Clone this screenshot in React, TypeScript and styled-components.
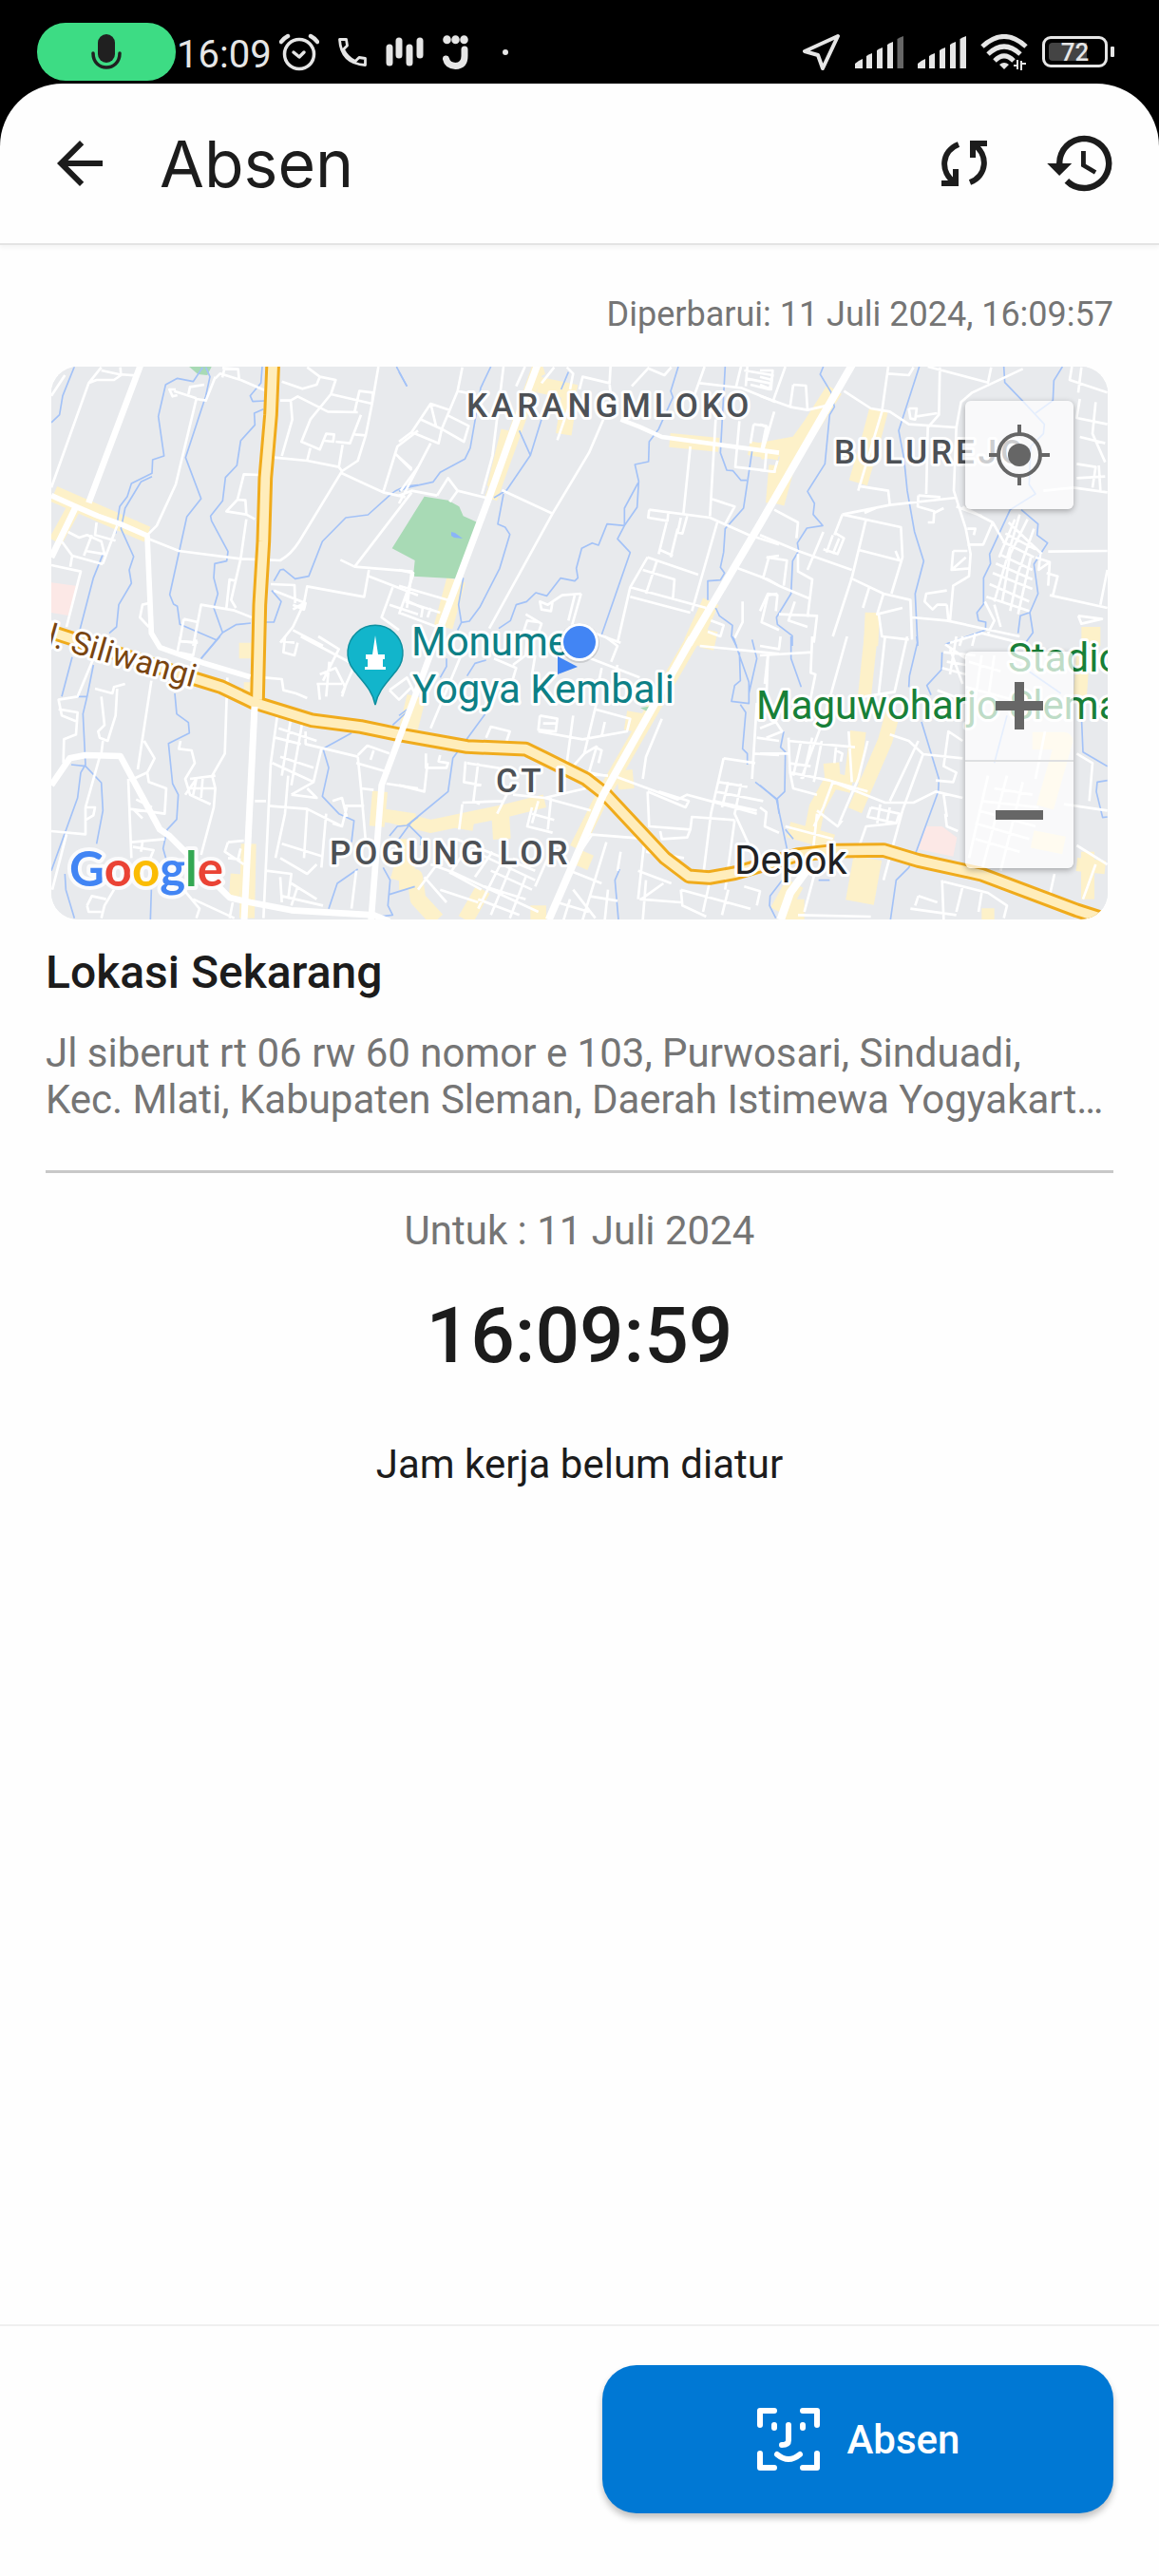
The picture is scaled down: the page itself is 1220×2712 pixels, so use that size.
import React from "react";
import styled, { createGlobalStyle, css } from "styled-components";
import { MdArrowBack, MdHistory } from "react-icons/md";

const ink = "#1c1c1c";
const muted = "#757575";
const statusInk = "#e6e6e6";

const GlobalStyle = createGlobalStyle`
  *, *::before, *::after { box-sizing: border-box; }
  body { margin: 0; background: #000; font-family: Roboto, "Noto Sans", sans-serif; color: ${ink}; }
  h1, h2, p { margin: 0; font-weight: 400; }
  button { border: 0; padding: 0; margin: 0; background: none; font: inherit; color: inherit; cursor: pointer; }
  svg { display: block; flex: none; }
`;

const Screen = styled.div`
  min-height: 100vh;
  display: flex;
  flex-direction: column;
`;

/* ---------- status bar ---------- */

const StatusBar = styled.div`
  display: flex;
  align-items: center;
  justify-content: space-between;
  height: 88px;
  padding: 24px 47px 3px 39px;
  color: ${statusInk};
`;

const StatusGroup = styled.div<{ $gap: number }>`
  display: flex;
  align-items: center;
  gap: ${(p) => p.$gap}px;
`;

const MicPill = styled.div`
  display: flex;
  align-items: center;
  justify-content: center;
  width: 146px;
  height: 61px;
  border-radius: 30px;
  background: #3ddc84;
`;

const StatusTime = styled.time`
  font-size: 40px;
  line-height: 48px;
  padding: 6px 8px 0 1px;
`;

const StatusDot = styled.span`
  width: 6px;
  height: 6px;
  margin-left: 16px;
  border-radius: 3px;
  background: ${statusInk};
`;

const Battery = styled.div`
  display: flex;
  align-items: center;
  gap: 3px;
`;

const BatteryBody = styled.div`
  width: 69px;
  height: 33px;
  border: 3px solid ${statusInk};
  border-radius: 9px;
  padding: 4px;
`;

const BatteryLevel = styled.div`
  display: flex;
  align-items: center;
  justify-content: center;
  height: 100%;
  border-radius: 4px;
  background: linear-gradient(to right, #444 72%, transparent 72%);
  font-size: 26px;
  line-height: 20px;
  font-weight: 500;
`;

const BatteryTip = styled.div`
  width: 4px;
  height: 11px;
  border-radius: 1px;
  background: ${statusInk};
`;

const Signal = ({ dimLast }: { dimLast?: boolean }) => (
  <svg width="51" height="34" viewBox="0 0 51 34" fill={statusInk} aria-hidden="true">
    <path d="M0 34V29Q3 26 8 24V34Z" />
    <path d="M12 34V21Q15 19 18 18V34Z" />
    <path d="M23 34V15Q26 13 29 12V34Z" />
    <path d="M34 34V9Q37 7 40 6V34Z" />
    <path d="M44.500 34V3Q48 1 51 0V34Z" fill={dimLast ? "#666" : statusInk} />
  </svg>
);

/* ---------- app bar ---------- */

const Sheet = styled.div`
  flex: 1;
  display: flex;
  flex-direction: column;
  background: #fefefe;
  border-radius: 66px 66px 0 0;
`;

const AppBar = styled.header`
  display: flex;
  align-items: center;
  height: 170px;
  padding: 0 43px 0 48px;
  border-bottom: 2px solid #e4e4e4;
  box-shadow: 0 3px 4px rgba(0, 0, 0, 0.04);
`;

const PageTitle = styled.h1`
  flex: 1;
  margin-left: 48px;
  font-family: Inter, Roboto, sans-serif;
  font-size: 68px;
  line-height: 80px;
`;

const Actions = styled.div`
  display: flex;
  align-items: center;
  gap: 60px;
`;

const IconButton = styled.button`
  display: flex;
  align-items: center;
  justify-content: center;
`;

/* ---------- content ---------- */

const Content = styled.main`
  flex: 1;
  display: flex;
  flex-direction: column;
  padding: 52px 48px 48px;
`;

const Updated = styled.p`
  text-align: right;
  font-size: 36px;
  line-height: 42px;
  color: ${muted};
`;

const MapFrame = styled.section`
  position: relative;
  height: 582px;
  margin: 34px 6px 28px;
  border-radius: 28px;
  overflow: hidden;
  background: #e8eaed;
`;

const floating = css`
  position: absolute;
  right: 36px;
  border-radius: 6px;
  background: rgba(255, 255, 255, 0.72);
  box-shadow: 0 2px 6px rgba(0, 0, 0, 0.3);
`;

const LocateButton = styled.button`
  ${floating}
  top: 36px;
  display: grid;
  place-items: center;
  width: 114px;
  height: 114px;
`;

const ZoomControls = styled.div`
  ${floating}
  bottom: 54px;
  display: flex;
  flex-direction: column;
  width: 114px;
`;

const ZoomButton = styled.button`
  display: grid;
  place-items: center;
  height: 114px;
  & + & { border-top: 2px solid #dedfe1; }
`;

const SectionTitle = styled.h2`
  font-size: 48px;
  line-height: 56px;
  font-weight: 500;
`;

const Address = styled.p`
  margin-top: 32px;
  padding-bottom: 50px;
  border-bottom: 3px solid #c8c8c8;
  font-size: 42px;
  line-height: 49px;
  color: ${muted};
`;

const Schedule = styled.section`
  display: flex;
  flex-direction: column;
  align-items: center;
  padding-top: 36px;
`;

const Line = styled.p<{ $muted?: boolean }>`
  font-size: 42px;
  line-height: 49px;
  color: ${(p) => (p.$muted ? muted : ink)};
`;

const Clock = styled.time`
  margin: 38px 0 63px;
  font-size: 82px;
  line-height: 96px;
  font-weight: 500;
`;

const Footer = styled.footer`
  display: grid;
  grid-template-columns: 1fr 1fr;
  gap: 48px;
  padding: 41px 48px 66px;
  border-top: 2px solid #efefef;
`;

const PrimaryButton = styled.button`
  grid-column: 2;
  display: flex;
  align-items: center;
  justify-content: center;
  gap: 28px;
  height: 156px;
  border-radius: 36px;
  background: #0078d4;
  box-shadow: 0 5px 7px rgba(0, 0, 0, 0.24);
  color: #fff;
  font-size: 42px;
  line-height: 49px;
  font-weight: 500;
`;

/* ---------- map artwork ---------- */

type Tile = {
  x: number;
  y: number;
  water: string;
  minor: string;
  roads?: [number, string][];
  built?: [number, string][];
  park?: string;
  pink?: string;
};

// Each tile is drawn at three units per pixel, from its own corner.
const tiles: Tile[] = [
  {
    x: -14,
    y: -16,
    water:
      "M115,48L78,140 68,200 42,225M520,50L490,95 440,85 403,105 380,205 398,330 362,342 360,385 295,417 282,458 258,490 245,575M205,640L175,715 132,880M360,395L325,412 275,495 262,560 302,648 288,690 295,732 255,800 248,870 225,890M530,50L543,80 530,140 466,335 515,465 470,522 416,768 428,798 440,805 448,862 565,912M708,48L704,100 670,140 678,158 715,156M712,182L683,195 685,232 640,282 628,360 592,398 583,472 545,520 548,535 600,632 596,662 558,670 555,715 568,765 555,810 583,888 515,970M583,888L625,863 672,858M715,855L745,855 768,790 738,755M745,725L765,690 775,688 812,718 855,710 898,600 972,525 1042,516 1110,455Q1140,425 1200,422M1132,48L1165,110",
    minor:
      "M42,430L160,100 200,50M160,100L185,90 240,90 262,75 260,50M200,60L255,72 310,76M42,140L85,75M560,80L530,155 500,150 435,420 375,550 345,580M430,125L500,148M435,120L415,120 425,142 440,138M475,135L480,112 525,105M560,85L575,70 640,90 715,122M590,50L582,82M582,52L632,56 635,88M345,590L445,630 640,655 765,660Q800,640 825,600L960,378 1010,345 1035,265 1000,262M960,378L950,365 850,345 745,335M950,365L962,295M765,155L798,155 820,142 915,190 1010,192M798,155L803,215 770,330M770,95L835,118 880,105 890,80 850,50M890,80L940,90 925,135 860,215 832,285 890,310 910,260 935,262 932,285 905,282M925,135L1055,165 1058,130 1015,125 1000,190M1075,48L1055,165 1035,265M1020,200L985,290 940,285M860,305L850,345M960,385L1090,445 1160,460M1090,445L1135,300 1200,250M1130,325L1180,370M1145,440L1200,365M1180,445L1000,680 955,658M1000,680L1180,695 1165,810M1045,690L1030,775 850,742 840,795 805,815M735,735L810,738 812,795M745,755L845,795 840,815 805,800M1045,710L1200,770M1120,745L1085,840 1140,880M1110,800L1200,830M700,390L650,388 630,468 655,470 658,515 595,505 630,468M658,515L685,530M658,530L640,655 610,785 625,810M595,810L605,720 625,725M675,840L620,818 515,800 490,930M460,845L505,855M460,845L448,915 505,920M42,675L135,695 90,870M75,600L108,645 102,680M108,645L205,672M185,540L180,580 245,598M95,570L130,588 155,580 200,600 210,640 150,630M170,580L145,645M250,550L205,670M350,795L330,800 322,840 350,870M840,795L805,870 765,920M805,880L900,930M765,915L810,920",
    roads: [
      [17, "M42,455L120,490 190,520 260,545 345,582 358,890 385,935 525,985 670,1028"],
      [20, "M325,40L160,478M120,490L42,650"],
    ],
    built: [[52, "M50,450L345,578"], [44, "M110,500L55,600"], [30, "M300,545L345,580"]],
    park: "M468,40L552,40 535,75 505,72Z",
    pink: "M42,730L120,740 100,835 42,825Z",
  },
  {
    x: 366,
    y: -16,
    water:
      "M290,48L258,115 225,305 208,340 130,382 108,412 50,425Q20,430 0,442M0,65L25,110M535,65L512,120M470,150L415,328 340,438 300,462M380,250L415,328M330,450L312,545 335,555 350,578 318,685 255,808 222,852 197,856 188,800 203,715M197,856L185,880M882,48L858,125 865,145 820,245 790,285 788,348 745,357 757,410 752,492 712,550 657,545 630,612 610,605 577,622 560,685 565,715 555,725 510,716 467,772 432,762 403,790 370,800 352,850 315,875M755,415L712,495 712,550 690,592 730,635 640,895M1030,48L1015,320 1035,375 1055,377 1080,407 1098,407M1115,315L1088,495 1030,560 1025,635 1015,682 1028,700 1015,722 975,725 975,785M1000,810L1012,835 1053,865 1050,900 1065,930",
    minor:
      "M200,50L185,125 235,135M185,125L160,185 100,165 40,255 125,290 135,245M160,185L135,245 205,285 220,235 150,200M100,165L118,240M70,215L135,245M40,255L0,285M100,290L0,480M0,335L40,375M330,48L295,330 262,450M398,48L370,110M275,462L185,440 155,400 120,455M185,440L160,475M0,455L40,440 120,455M325,438L485,512M645,215L600,320 485,512 285,875M530,50L550,70 540,120M545,150L500,280M668,48L665,100 580,80 570,120M665,105L668,130M735,110L790,50M790,55L838,75 860,50M965,48L925,160M950,100L1080,115 1190,160M1080,48L1065,110M1090,60L1180,75 1170,120 1110,105M1100,48L1095,110M1095,85L1170,100M1000,215L982,520M920,300L898,515M790,500L982,525 1105,580 1200,610M790,500L787,525 848,535 850,510M845,540L820,640M910,520L895,575 880,572 890,525M880,560L858,650M985,465L1060,490 1030,545M1005,540L925,820M785,650L945,705M785,650L730,745 690,920M730,745L970,810M770,690L870,720 865,780M815,660L780,765M820,625L865,645M730,775L920,825M1075,220L1062,365 1190,380M1120,230L1160,235 1145,310M1120,230L1110,290M1185,190L1150,310M1160,320L1155,375M1070,685L1165,720 1200,740M1200,645L1168,650 1150,715M1085,790L1085,855 1060,905M1195,765L1165,770 1145,855 1200,880M985,850L1025,865 1015,900 975,885M0,690L45,700 20,790M45,705L0,830M0,740L155,785M20,790L130,825M30,790L75,810 70,840M100,810L90,840M0,825L120,870M575,765L545,870M575,765L515,770 470,800 445,790 450,815 480,820 485,790M555,770L535,850M400,830L450,860 440,890 395,880 405,850 440,855M550,865L700,920M450,100L490,50",
    roads: [
      [14, "M700,215L760,238 830,270 1200,320"],
      [22, "M438,40L360,250 285,460 135,860"],
      [24, "M1432,40L1140,545 915,925"],
    ],
    built: [
      [46, "M455,50L425,60M345,250L300,430"],
      [50, "M440,105L560,130M540,130L520,262"],
      [44, "M855,280L1010,295M1105,305L1200,322"],
      [60, "M180,722L140,870"],
      [54, "M985,790L925,920M1195,360L1185,480"],
      [40, "M440,50L290,465"],
    ],
    park: "M80,458L155,470 190,490 203,520 248,540 182,718 45,710 50,660 -22,622Z",
  },
  {
    x: 746,
    y: -16,
    water:
      "M200,48L190,72 225,130 235,175 220,200 205,355 150,442 172,480 168,515 198,550 148,558 118,605 122,630 103,662 98,765 52,840 55,862 102,898 102,930M503,48L438,250 455,340 465,440 488,570 517,662 490,765 498,930M770,48L773,98 828,155 870,200 898,230 895,260 855,300 850,420 870,450 790,500 725,640 728,670 706,715 706,798 685,825 690,850 713,855 712,880 585,925M955,48L928,92 925,155 870,195M825,500L878,545 875,580 908,605 865,672 878,765 852,825 862,888 835,925M850,825L822,835 815,890",
    minor:
      "M80,48L40,160M105,105L145,108 150,185 95,175 105,105M0,140L95,175M150,185L215,170M265,125L350,180 410,190 470,230 620,240 635,160 670,130 830,55M405,48L385,190 310,440M405,70L470,75 485,50M530,48L720,98 730,50M568,50L565,200 530,240 525,450M470,180L495,180 490,215 475,212 470,180M495,205L560,195M620,240L612,440 650,560 665,640 660,710 610,740 600,850M310,425L405,440 410,485M260,515L410,485 620,462M365,495L330,510M500,455L498,490 550,505 548,540 530,540M550,510L580,495M500,455L570,460M620,490L700,520M260,515L235,580M260,515L445,555 450,650 415,765M335,530L290,715 230,900M315,628L440,660 428,630M45,500L120,540 115,590M0,580L120,630 290,690M285,715L390,765 475,785 480,910M345,745L325,810M390,765L370,830 450,810M375,830L385,900 470,910M120,640L120,695 165,720 150,840M0,710L60,740 155,780M200,570L150,690M240,575L265,590 245,640 200,625M230,580L210,635M250,590L230,640M20,650L85,660 75,740M0,820L25,765 55,770 50,820M60,830L180,835 170,920M110,790L90,850 150,870M640,490L735,540 705,610 655,610M655,560L680,560 675,580M735,540L775,610M610,630L655,630M610,630L605,690 650,650M605,690L665,685M590,755L525,765 520,790 545,815 560,800 590,800M480,840L590,850 820,900M590,800L595,850M785,540L890,640M775,575L870,625M765,600L865,650M755,640L860,690M745,670L860,720M735,700L860,750M725,735L850,790M715,775L850,820M820,515L740,790M845,530L790,640 765,790M865,560L815,700 790,820M855,650L815,830M805,530L755,650M710,790L740,850 720,890M740,800L760,870M910,632L1097,630M870,650L915,665 910,740M885,640L880,690 915,665M915,770L1097,810M1097,690L1075,800M905,700L940,710 925,770M985,48L978,90 1097,130M1015,50L1005,130M1010,150L1000,210 1097,230M1060,160L1050,260 1090,350M1010,270L1090,290M1000,355L1060,365 1050,430M1000,400L1090,395M895,440L990,430 1097,445M1070,360L1075,440M1005,835L1080,845 1015,860 1005,835M0,230L25,240 10,290M0,375L45,380 55,345M0,60L40,60 35,120 0,105M0,80L38,90M600,920L700,890 820,920M640,900L630,930M680,890L670,930",
    built: [
      [60, "M375,185L350,280 310,415"],
      [54, "M235,120L165,230 100,320M0,315L140,290M100,300L50,480"],
      [46, "M355,825L350,930"],
      [60, "M1045,870L1045,930"],
    ],
  },
  {
    x: -14,
    y: 284,
    water:
      "M175,90L155,190 142,245 150,405 135,430 125,510 42,740M108,65L75,190M120,190L155,190M105,405L150,410 200,462 205,550 185,655M85,750L88,800 115,890M432,180L438,245 475,272 478,305 412,338 425,465 443,500 438,578 408,610 395,670 405,705M358,800L355,895M575,0L515,70M1180,225L1120,280M990,305L900,355 918,415 898,505 950,560 998,582 990,650M1010,735L945,780 918,860M1090,730L1112,770 1105,850 1120,880 1075,885M1110,630L1135,600 1165,597 1200,570M1110,815L1190,790",
    minor:
      "M175,70L125,190 65,200 75,250 125,270M65,230L125,240 120,310 82,325 80,400M180,165L235,180 240,160 275,150M250,165L245,250 220,330 195,320 190,300 210,280 200,190M205,330L200,370M195,380L150,540 150,625 42,615M150,540L180,540 175,565 150,580M90,625L45,800M358,140L315,420M335,330L368,385 345,430M290,455L345,430 350,460 405,480 400,560 290,545M285,450L295,700M300,545L330,575M310,515L360,540M295,650L400,640M300,665L365,675 355,700M330,650L325,680M598,130L590,370 550,440 560,480 555,540 515,690M450,330L445,355 485,360 495,400 465,450 480,500 545,530M480,450L560,440M500,450L490,500M520,450L515,510M480,480L560,480M465,500L500,450M715,130L770,135 775,170 815,180 850,195M755,255L735,400 712,890M800,250L770,440M835,270L800,470M760,290L880,330M750,320L830,340M740,400L870,460M765,380L870,415M685,520L720,520M725,535L850,545 960,600M790,440L780,560 750,700M895,355L870,460 800,500M845,300L845,340 1010,380M1010,380L1020,480 1060,485M1005,400L1110,430M1020,480L1035,650M1100,465L1200,480M1010,375L1040,345 1110,370M1060,360L1050,390M850,545L840,700M910,560L895,730M770,655L900,695M765,700L850,750 880,720M800,500L880,510 850,480M720,740L800,750 790,830M800,780L880,830M770,820L900,850M765,760L770,840M820,790L800,850M930,520L960,510 975,570M930,590L960,600 975,540M1005,740L990,860M970,535L1030,535M780,0L775,50 810,60 820,20M885,0L950,40 900,140M890,120L940,100 970,160 960,190M920,80L910,190M830,0L1000,90M960,180L1005,80M1110,170L1165,130 1190,180M1110,170L1140,200 1180,160M885,150L890,200M880,150L960,150M600,650L650,645M600,650L590,680 650,720M600,700L640,705M640,670L630,710M460,800L510,860 500,890M490,830L620,890M615,840L605,890M240,800L210,850 200,890M155,850L170,820 215,830M155,850L160,870 200,870M450,0L440,50 490,60 500,10M445,15L500,20",
    roads: [
      [20, "M42,470L100,385 150,375 260,378 385,610 415,630 470,685 570,790 605,825 670,840 800,865 1060,880 1110,900"],
    ],
    built: [
      [48, "M665,655L660,890"],
      [34, "M625,750L620,820"],
      [48, "M1080,490L1070,600"],
      [42, "M1090,565L1190,580"],
      [50, "M1165,640L1165,800"],
      [70, "M670,20L670,70M650,180L690,180"],
      [60, "M1195,190L1170,290"],
    ],
  },
  {
    x: 366,
    y: 284,
    water:
      "M272,245L170,385 155,490 40,585 0,640M30,595L70,635 68,660M150,70L150,95 130,130M275,75L240,85 215,125M0,250L40,220M697,735L682,770 693,895M1055,0L1075,60 1105,145 1105,212 1050,205 1060,155 1078,140 1075,50M1115,10L1130,70 1105,180M1078,215L1095,240 1085,355 1100,370 1100,405M1125,460L1195,515 1200,560",
    minor:
      "M300,70L370,100 355,150M200,50L100,290M275,320L290,285 350,300 340,330M445,250L500,260 495,300 440,295 445,250M455,275L500,275M440,300L580,325 720,300 730,260 620,230M625,205L585,370 550,410M650,270L640,315M550,250L530,400M625,345L600,430 650,440M585,370L620,350 640,360 630,400M830,260L780,380 770,450M690,445L880,515 910,500 1130,560M785,490L905,540 915,520 820,490M785,490L790,600 920,610 910,635 830,640 825,615M920,610L925,570 1060,580M1025,385L1125,400M1025,385L985,560M1010,460L1100,475M1000,490L1150,520M995,520L1130,550M1040,460L1020,540M1080,465L1060,560 1115,680M985,560L960,760M1060,580L1030,800M1165,60L1160,200M1130,210L1115,450M1120,370L1200,375M1130,320L1200,330M950,30L1200,55M600,625L790,640M610,625L560,700M655,650L580,895M775,645L755,830M700,680L690,740M755,740L860,780M780,680L900,700M835,780L765,830M760,830L890,840M780,770L770,895M890,800L1110,860M890,800L895,850 970,885M980,780L960,870M1090,790L1140,805 1130,850M1040,800L1020,880M0,470L80,490 90,400M85,370L85,415 150,415 155,400 125,395 130,375M210,395L205,460 260,470M250,400L235,520 255,530M215,400L340,420M345,490L310,560M200,530L190,610M200,525L330,520M360,500L460,510 590,480M460,510L605,550M420,540L405,600 485,620M420,560L490,580M480,510L470,610M440,520L420,590M100,720L170,745 440,870M160,745L260,800M330,700L250,860M365,700L290,880M400,760L350,890M180,640L430,740M260,690L430,770M290,740L420,800M270,790L400,830M250,830L380,880M295,680L240,760M220,660L160,750M470,700L430,790M540,740L640,780M550,800L620,890M500,840L600,870M540,830L520,895M660,800L650,895M600,820L690,835M80,760L150,840M60,800L120,720M130,800L250,840M360,90L400,60 405,0M430,60L420,120M580,60L760,130M640,100L620,200M690,90L670,180M590,435L660,440M650,0L690,30 670,80",
    roads: [
      [20, "M135,-40L50,190 5,310 -55,470 -88,895"],
      [24, "M925,5L645,500 473,895"],
    ],
    built: [
      [42, "M-20,570L100,600 340,550 460,520"],
      [56, "M320,560L325,640M210,580L205,610"],
      [44, "M930,5L645,500 560,670"],
      [60, "M750,240L740,300M690,455L740,450M955,5L1000,15"],
      [50, "M-20,740L50,760 60,830 120,895M265,800L210,895M440,850L440,895M570,700L605,715"],
    ],
    park: "M762,226L797,220 790,240Z",
  },
  {
    x: 746,
    y: 284,
    water:
      "M98,0L98,70 130,160M75,300L65,350 80,365 78,490 52,515 85,670M0,470L52,515M80,610L105,640M495,0L497,20 472,125 470,160M510,270L565,450 563,490 495,675 470,730 430,770 412,895M70,770L32,820 30,850 50,890M575,50L573,105 527,155 540,185M1015,250L1020,365 1097,410M1097,455L1065,460 1062,490 1082,572 1097,570M185,770L220,770M780,250L740,400M820,90L950,180",
    minor:
      "M0,60L165,50M65,0L60,40 0,30M165,0L160,115 175,120 145,270M15,150L25,60M275,0L205,250 130,450M395,0L375,180M330,190L425,175 465,0M0,290L50,270 70,300 20,320M90,330L300,350M0,370L90,370M90,320L95,430 105,480 180,500M130,330L105,440M165,320L135,450M195,330L170,460M90,400L160,410M95,430L220,455 340,490M240,350L235,400M240,360L260,370 255,395M280,300L290,460M340,330L310,450 250,590M410,310L470,330 515,372 640,385M230,460L395,525 485,525 555,490 640,510M500,330L410,520M515,372L450,550 390,770M350,540L440,560 430,590 340,570 350,540M380,530L370,590M410,540L400,590M300,700L335,600 430,590M180,550L245,600 260,580M170,600L200,540 230,460M555,455L610,460 620,430 580,410 595,300 640,330M585,560L590,600 625,615M580,500L590,570M80,600L230,640M0,540L20,555 15,600 60,620M180,560L165,700M575,770L580,895M580,775L720,810 780,850 770,890M500,820L560,840M475,860L620,880M640,790L620,870M490,850L500,820M700,810L690,870M120,880L350,885M960,530L1097,550M1000,660L1097,720M1000,370L1050,400 1040,520M930,750L910,840M1060,720L1020,830M175,740L140,870M650,160L800,200M690,550L870,600M680,590L850,640M720,440L660,700M780,440L700,740M830,460L760,740M900,300L870,450M740,480L860,500M700,520L880,540M680,640L820,680M585,25L650,70M590,80L650,90M600,40L640,150M560,170L640,200M620,0L600,120M580,50L680,60M575,100L650,120M660,80L760,110M700,60L680,200M740,60L720,200",
    roads: [[26, "M150,735L95,810 65,895"]],
    built: [
      [42, "M350,0L330,190"],
      [46, "M420,240L395,330 300,550"],
      [50, "M310,300L290,460M290,470L230,455 225,400"],
      [50, "M230,450L180,540 160,640M90,610L230,650"],
      [90, "M340,700L315,840"],
      [60, "M110,780L60,870M110,830L110,895"],
      [56, "M860,330L960,330 900,540M860,640L960,660"],
      [42, "M1000,720L1090,730M1035,680L1035,830M1020,60L1010,200M700,880L740,880"],
    ],
    pink: "M525,600L575,600 622,635 610,695 500,672Z",
  },
];

const at = (t: { x: number; y: number }) => `translate(${t.x} ${t.y}) scale(0.33333)`;

const MapLabel = styled.text<{ $spaced?: boolean }>`
  font-family: Roboto, sans-serif;
  font-size: ${(p) => (p.$spaced ? 35 : 42)}px;
  font-weight: ${(p) => (p.$spaced ? 500 : 400)};
  letter-spacing: ${(p) => (p.$spaced ? "4px" : "normal")};
  paint-order: stroke;
  stroke: #fff;
  stroke-width: 6px;
  stroke-linejoin: round;
`;

const RoadLabel = styled(MapLabel)`
  font-size: 34px;
`;

const LogoText = styled.text`
  font-family: Lato, sans-serif;
  font-size: 51px;
  font-weight: 700;
  paint-order: stroke;
  stroke: rgba(255, 255, 255, 0.8);
  stroke-width: 8px;
  stroke-linejoin: round;
`;

const CityMap = () => {
  const vertical = "M742,30L735,200 718,400 712,600 700,800 693,1100";
  const ring =
    "M-1110,-18L-650,132 -560,160 -460,208 -275,265 -120,285 0,310 215,348 400,356 460,385 590,450 650,497 840,700 915,757 980,762 1060,748 1260,690 1380,677 1530,675 1640,708 1840,752 2140,865 2250,900";
  return (
    <svg width="100%" height="100%" viewBox="0 0 1112 582" preserveAspectRatio="xMidYMid slice" role="img" aria-label="Peta lokasi">
      <rect width="1112" height="582" fill="#e8eaed" />
      <g fill="none" stroke="#fdf1c9" strokeLinejoin="round">
        {tiles.map((t, i) => (
          <g key={i} transform={at(t)}>
            {t.built?.map(([w, d], k) => <path key={k} d={d} strokeWidth={w} />)}
          </g>
        ))}
      </g>
      {tiles.map((t, i) => (
        <g key={i} transform={at(t)}>
          {t.park && <path d={t.park} fill="#a8dab5" />}
          {t.pink && <path d={t.pink} fill="#fce8e6" />}
        </g>
      ))}
      <g fill="none" stroke="#a3c2f7" strokeWidth="5" strokeLinejoin="round">
        {tiles.map((t, i) => <path key={i} transform={at(t)} d={t.water} />)}
      </g>
      <path d="M421 174l4 1 8 6-9-1-3-2z" fill="#8ab4f8" />
      <g fill="none" stroke="#fff" strokeWidth="8" strokeLinejoin="round">
        {tiles.map((t, i) => <path key={i} transform={at(t)} d={t.minor} />)}
      </g>
      <g fill="none" strokeLinejoin="round">
        <g stroke="#f0ab1c" strokeWidth="47">
          <path d={vertical} transform={at(tiles[0])} />
          <path d={ring} transform={at(tiles[4])} />
        </g>
        <g stroke="#ffedbb" strokeWidth="29">
          <path d={vertical} transform={at(tiles[0])} />
          <path d={ring} transform={at(tiles[4])} />
        </g>
      </g>
      <g fill="none" stroke="#fff" strokeLinejoin="round">
        {tiles.map((t, i) => (
          <g key={i} transform={at(t)}>
            {t.roads?.map(([w, d], k) => <path key={k} d={d} strokeWidth={w} />)}
          </g>
        ))}
        <path d="M214 358L203 583" strokeWidth="7" />
      </g>

      <MapLabel $spaced x="437" y="53" fill="#4d5156">KARANGMLOKO</MapLabel>
      <MapLabel $spaced x="824" y="102" fill="#4d5156">BULUREJO</MapLabel>
      <MapLabel $spaced x="468" y="448" fill="#4d5156">CT I</MapLabel>
      <MapLabel $spaced x="293" y="524" fill="#4d5156">POGUNG LOR</MapLabel>
      <MapLabel x="379" y="304" fill="#0d8086">Monumen</MapLabel>
      <MapLabel x="380" y="354" fill="#0d8086">Yogya Kembali</MapLabel>
      <MapLabel x="1007" y="321" fill="#188038">Stadion</MapLabel>
      <MapLabel x="742" y="371" fill="#188038">Maguwoharjo Sleman</MapLabel>
      <MapLabel x="719" y="534" fill="#202124">Depok</MapLabel>
      <RoadLabel transform="translate(-24 288) rotate(16)" fill="#7a4510">Jl. Siliwangi</RoadLabel>

      <path d="M341 356C338 340 327 331 318 319A29 29 0 1 1 364 319C355 331 344 340 341 356Z" fill="#12b5cb" stroke="#0d8f9f" strokeWidth="1.500" />
      <path d="M341 283l3 20h7v5h-2v8h3v3h-22v-3h3v-8h-2v-5h7z" fill="#fff" />

      <path d="M533 305L554 316 533 324Z" fill="#4285f4" />
      <circle cx="556" cy="291" r="21" fill="#000" opacity="0.12" />
      <circle cx="556" cy="290" r="20" fill="#fff" />
      <circle cx="556" cy="290" r="17" fill="#4285f4" />

      <LogoText x="19" y="547">
        <tspan fill="#4285f4">G</tspan>
        <tspan fill="#ea4335">o</tspan>
        <tspan fill="#fbbc04">o</tspan>
        <tspan fill="#4285f4">g</tspan>
        <tspan fill="#34a853">l</tspan>
        <tspan fill="#ea4335">e</tspan>
      </LogoText>
    </svg>
  );
};

export default function App() {
  return (
    <Screen>
      <GlobalStyle />
      <StatusBar>
        <StatusGroup $gap={0}>
          <MicPill>
            <svg width="32" height="38" viewBox="0 0 32 38" aria-hidden="true">
              <rect x="7" y="0" width="18" height="30" rx="9" fill="#202020" />
              <path d="M2 20C2 40 30 40 30 20" fill="none" stroke="#202020" strokeWidth="3.500" strokeLinecap="round" />
            </svg>
          </MicPill>
          <StatusTime>16:09</StatusTime>
          <StatusGroup $gap={20}>
            <svg width="42" height="40" viewBox="0 0 42 40" fill="none" stroke={statusInk} strokeLinecap="round" aria-hidden="true">
              <circle cx="21" cy="22" r="15.500" strokeWidth="3.500" />
              <path d="M15 20l6 5 5-5" strokeWidth="3.500" strokeLinejoin="round" />
              <path d="M2 9Q5 5 9 3M40 9Q37 5 33 3" strokeWidth="4.500" />
            </svg>
            <svg width="30" height="30" viewBox="0 0 30 30" fill="none" stroke={statusInk} strokeWidth="2.800" strokeLinejoin="round" aria-hidden="true">
              <path d="M1.500 1.500H8.500L9.500 8 5.500 12Q9.500 20.500 18 24.500L22 20.500 28.500 21.500V28.500Q3 27 1.500 1.500Z" />
            </svg>
            <svg width="40" height="34" viewBox="0 0 40 34" stroke={statusInk} strokeWidth="7" strokeLinecap="round" aria-hidden="true">
              <path d="M4 12V28M14 5V20M25 12V28M36 5V20" />
            </svg>
            <svg width="27" height="36" viewBox="0 0 27 36" fill="none" stroke={statusInk} strokeLinecap="round" aria-hidden="true">
              <path d="M3.500 25Q5 32 13.500 32.500Q23 32 23 22V15" strokeWidth="7" />
              <path d="M4.500 4.500V5M13.500 4.500V5M22.500 4.500V5" strokeWidth="8.500" />
            </svg>
            <StatusDot />
          </StatusGroup>
        </StatusGroup>
        <StatusGroup $gap={15}>
          <svg width="40" height="40" viewBox="0 0 40 40" fill="none" stroke={statusInk} strokeWidth="4" strokeLinejoin="round" aria-hidden="true">
            <path d="M37 3L2 19 16 23 21 37Z" />
          </svg>
          <Signal dimLast />
          <Signal />
          <svg width="50" height="38" viewBox="0 0 50 38" fill="none" stroke={statusInk} aria-hidden="true">
            <path d="M2 13Q25-8 48 13M8 21Q25 5 42 21M15 28Q25 18 35 28" strokeWidth="5" />
            <path d="M20 32Q25 28 30 32L25 37Z" fill={statusInk} stroke="none" />
            <path d="M35 33h4v4M39 27v10M43 38V28M43 31h5" strokeWidth="2" />
          </svg>
          <Battery>
            <BatteryBody>
              <BatteryLevel>72</BatteryLevel>
            </BatteryBody>
            <BatteryTip />
          </Battery>
        </StatusGroup>
      </StatusBar>

      <Sheet>
        <AppBar>
          <IconButton aria-label="Kembali">
            <MdArrowBack size={72} />
          </IconButton>
          <PageTitle>Absen</PageTitle>
          <Actions>
            <IconButton aria-label="Muat ulang">
              <svg width="48" height="48" viewBox="0 0 48 48" fill="none" stroke={ink} strokeWidth="6" aria-hidden="true">
                <path d="M18 4C0 11-2 33 14 44" />
                <path d="M0 45H15V30" />
                <path d="M30 44C48 37 50 15 34 4" />
                <path d="M48 3H33V18" />
              </svg>
            </IconButton>
            <IconButton aria-label="Riwayat">
              <MdHistory size={78} />
            </IconButton>
          </Actions>
        </AppBar>

        <Content>
          <Updated>Diperbarui: 11 Juli 2024, 16:09:57</Updated>
          <MapFrame>
            <CityMap />
            <LocateButton aria-label="Lokasi saya">
              <svg width="64" height="64" viewBox="0 0 64 64" fill="none" stroke="#666" strokeWidth="4" aria-hidden="true">
                <circle cx="32" cy="32" r="22" />
                <circle cx="32" cy="32" r="12" fill="#666" stroke="none" />
                <path d="M32 0V9M32 55V64M0 32H9M55 32H64" />
              </svg>
            </LocateButton>
            <ZoomControls>
              <ZoomButton aria-label="Perbesar">
                <svg width="50" height="50" viewBox="0 0 50 50" fill="none" stroke="#666" strokeWidth="10" aria-hidden="true">
                  <path d="M25 0V50M0 25H50" />
                </svg>
              </ZoomButton>
              <ZoomButton aria-label="Perkecil">
                <svg width="50" height="50" viewBox="0 0 50 50" fill="none" stroke="#666" strokeWidth="10" aria-hidden="true">
                  <path d="M0 25H50" />
                </svg>
              </ZoomButton>
            </ZoomControls>
          </MapFrame>
          <SectionTitle>Lokasi Sekarang</SectionTitle>
          <Address>
            Jl siberut rt 06 rw 60 nomor e 103, Purwosari, Sinduadi,
            <br />
            Kec. Mlati, Kabupaten Sleman, Daerah Istimewa Yogyakart…
          </Address>
          <Schedule>
            <Line $muted>Untuk : 11 Juli 2024</Line>
            <Clock>16:09:59</Clock>
            <Line>Jam kerja belum diatur</Line>
          </Schedule>
        </Content>

        <Footer>
          <PrimaryButton>
            <svg width="68" height="68" viewBox="0 0 68 68" fill="none" stroke="#fff" strokeWidth="6" strokeLinecap="round" strokeLinejoin="round" aria-hidden="true">
              <path d="M4 19V4H19M49 4H64V19M64 49V64H49M19 64H4V49" />
              <path d="M19 19V22M49 19V22" />
              <path d="M34 19V35Q34 40 27 40" />
              <path d="M22 50Q34 60 46 50" />
            </svg>
            Absen
          </PrimaryButton>
        </Footer>
      </Sheet>
    </Screen>
  );
}
